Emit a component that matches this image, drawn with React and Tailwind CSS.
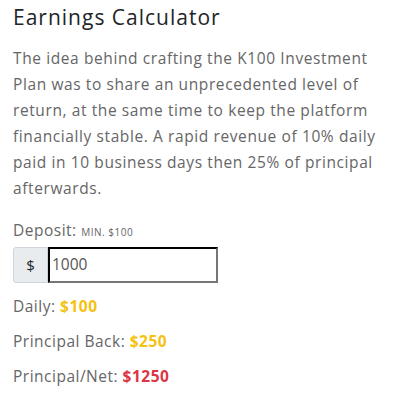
export default function App() {
  return (
    <div className="w-[400px] h-[404px] bg-white px-[13px] pt-[2px] font-['Open_Sans',sans-serif] text-[#666]">
      <h2 className="text-[21px] leading-[30px] text-[#212529] tracking-[1px]">Earnings Calculator</h2>
      <p className="mt-[13px] text-[15.5px] leading-[26px] tracking-[0.6px] w-[380px]">
        The idea behind crafting the K100 Investment Plan was to share an unprecedented level of return, at the
        same time to keep the platform financially stable. A rapid revenue of 10% daily paid in 10 business days
        then 25% of principal afterwards.
      </p>
      <div className="mt-[17px] text-[15.5px] leading-[24px] tracking-[0.5px]">
        Deposit: <span className="text-[10px] uppercase">Min. $100</span>
      </div>
      <div className="mt-[3px] flex h-[36px] w-[205px]">
        <span className="flex w-[35px] items-center justify-center rounded-l-[3px] border border-[#ced4da] bg-[#e9ecef] text-[15px] text-[#212529]">
          $
        </span>
        <input
          className="min-w-0 flex-1 border-2 border-t-black border-l-black border-r-[#767676] border-b-[#767676] px-[2px] text-[15.5px] text-[#555] outline-none"
          defaultValue="1000"
        />
      </div>
      <div className="mt-[11px] flex flex-col gap-[11px] text-[15.5px] leading-[24px] tracking-[0.5px]">
        <div>
          Daily: <span className="font-bold text-[#f5c211]">$100</span>
        </div>
        <div>
          Principal Back: <span className="font-bold text-[#f5c211]">$250</span>
        </div>
        <div>
          Principal/Net: <span className="font-bold text-[#dc3545]">$1250</span>
        </div>
      </div>
    </div>
  )
}
